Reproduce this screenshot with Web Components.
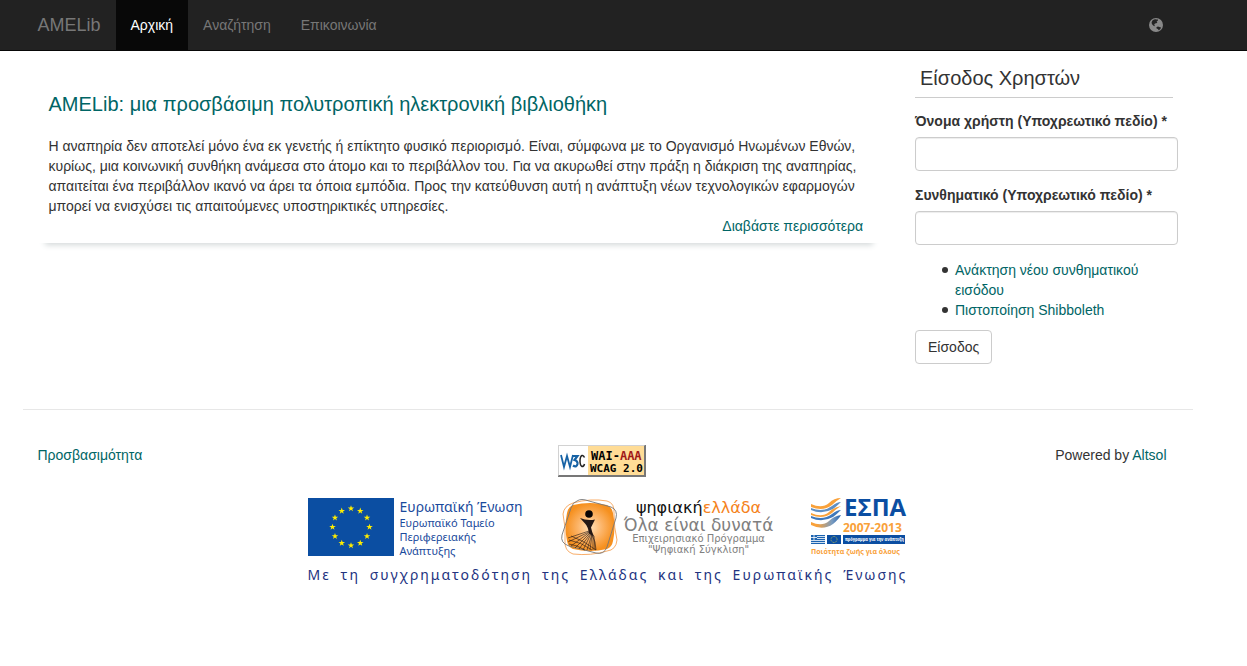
<!DOCTYPE html>
<html lang="el">
<head>
<meta charset="utf-8">
<meta name="viewport" content="width=device-width, initial-scale=1">
<title>AMELib</title>
<style>
  html { --link: #006565; --text: #333; --rule: #ccc; --gutter: 32px; }
  body {
    margin: 0;
    background: #fff;
    color: var(--text);
    font: 14px/20px "Liberation Sans", Arial, sans-serif;
  }
</style>
</head>
<body>
<amelib-page></amelib-page>
<script>
const define = (name, html) => {
  const template = document.createElement('template');
  template.innerHTML = html;
  customElements.define(name, class extends HTMLElement {
    constructor() {
      super();
      this.attachShadow({ mode: 'open' }).append(template.content.cloneNode(true));
    }
  });
};

const star = 'M0-3.2L.8-1 3.1-1 1.2.4 1.9 2.7 0 1.3-1.9 2.7-1.2.4-3.1-1-.8-1Z';
const stars = (cx, cy, r, s) => Array.from({ length: 12 }, (_, i) => {
  const a = i * Math.PI / 6;
  return `<path d="${star}" fill="#ffed00" transform="translate(${(cx + r * Math.sin(a)).toFixed(2)} ${(cy - r * Math.cos(a)).toFixed(2)}) scale(${s})"/>`;
}).join('');

define('site-navbar', `
<style>
  :host { display: block; background: #222; border-bottom: 1px solid #080808; }
  .bar { padding-right: var(--gutter); }
  nav { display: flex; max-width: 1170px; margin: 0 auto; }
  a { display: block; padding: 15px; color: #777; text-decoration: none; }
  .brand { font-size: 18px; }
  .active { color: #fff; background: #080808; }
  ul { display: flex; flex: 1; margin: 0; padding: 0; list-style: none; }
  button { display: block; margin: 0 15px 0 0; padding: 0 15px; border: 0; background: none; color: #888; }
  svg { display: block; }
</style>
<div class="bar"><nav>
  <a class="brand" href="#">AMELib</a>
  <ul>
    <li><a class="active" href="#">Αρχική</a></li>
    <li><a href="#">Αναζήτηση</a></li>
    <li><a href="#">Επικοινωνία</a></li>
  </ul>
  <button type="button" aria-label="Γλώσσα">
    <svg width="14" height="14" viewBox="0 0 14 14">
      <circle cx="7" cy="7" r="7" fill="currentColor"/>
      <path fill="#222" d="M3.400 2.600L5 1.500 6.400 1.200 7.600 1.600 9 1.600 8.800 2.800 7.600 3.400 8.400 4.400 7.300 5.200 6 5.600 5.200 6.400 5.800 7.400 5.400 8.200 4.200 7.400 2.900 6 2.600 4.400Z M7.400 9.200L9 8.600 10.400 9 12 9.400 11.400 11 9.800 12.200 8.800 11 7.600 10.600Z"/>
    </svg>
  </button>
</nav></div>`);

define('article-teaser', `
<style>
  :host { display: block; margin: 28px 6px 0 1px; padding: 14px 10px 7px; box-shadow: 0 8px 6px -6px #d3d8d9; }
  ::slotted(h2) { margin: 0 0 21px; font-size: 20px; font-weight: 400; line-height: 22px; color: var(--link); }
  ::slotted(p) { margin: 0; }
  .more { display: block; width: fit-content; margin: 0 6px 0 auto; color: var(--link); text-decoration: none; }
</style>
<slot></slot>
<a class="more" href="#">Διαβάστε περισσότερα</a>`);

define('login-panel', `
<style>
  :host { display: block; padding-top: 16px; }
  h2 { margin: 0 5px 13px 0; padding: 0 5px 8px; border-bottom: 1px solid var(--rule); font-size: 20px; font-weight: 400; line-height: 22px; }
  label { display: block; margin-bottom: 6px; font-weight: 700; white-space: nowrap; }
  input {
    display: block; box-sizing: border-box; width: 100%; height: 34px; margin: 0 0 14px; padding: 6px 12px;
    border: 1px solid var(--rule); border-radius: 4px; background: #fff; font: inherit; color: #555;
    box-shadow: inset 0 1px 1px #00000013;
  }
  ul { margin: 15px 0 10px; padding-left: 40px; list-style: none; }
  li::before { content: ""; display: inline-block; width: 6px; height: 6px; margin: 0 7px 0 -13px; border-radius: 50%; background: #333; vertical-align: 2px; }
  a { color: var(--link); text-decoration: none; }
  button { display: block; padding: 6px 12px; border: 1px solid var(--rule); border-radius: 4px; background: #fff; color: #333; font: inherit; }
</style>
<h2>Είσοδος Χρηστών</h2>
<form>
  <label for="user">Όνομα χρήστη (Υποχρεωτικό πεδίο) *</label>
  <input id="user" type="text">
  <label for="pass">Συνθηματικό (Υποχρεωτικό πεδίο) *</label>
  <input id="pass" type="password">
  <ul>
    <li><a href="#">Ανάκτηση νέου συνθηματικού εισόδου</a></li>
    <li><a href="#">Πιστοποίηση Shibboleth</a></li>
  </ul>
  <button type="button">Είσοδος</button>
</form>`);

define('wcag-badge', `
<style>
  :host { display: block; }
  a, svg { display: block; }
  text { font: 700 11px "DejaVu Sans Mono", monospace; }
  .level { font-size: 12px; }
</style>
<a href="#" aria-label="W3C WAI-AAA WCAG 2.0">
<svg width="88" height="32" viewBox="0 0 88 32">
  <path fill="#777" d="M0 0h88v32H0z"/>
  <path fill="#d2d2d2" d="M0 0h87l-1 1H1v29l-1 1z"/>
  <path fill="#fff" d="M1 1h29v29H1z"/>
  <path fill="#ffdc96" d="M30 1h56v29H30z"/>
  <g fill="none" stroke="#1662a5">
    <path stroke-width="1.800" d="M3 10l3 12 3-11 3 11 3-12"/>
    <path stroke-width="2.200" d="M14 11h5.500l-3 4q3.500 1 3 4-1 4-4.500 1.500"/>
  </g>
  <path fill="none" stroke="#222" stroke-width="1.500" d="M26.500 12.500q-1-2.500-2.500-2-2 1-2 5.500t2 5.500q2 0 2.500-2.500"/>
  <text class="level" x="33" y="15">WAI-<tspan fill="#a01818">AAA</tspan></text>
  <text x="32" y="27">WCAG 2.0</text>
</svg></a>`);

define('eu-logo', `
<style>
  :host { display: flex; gap: 6px; align-items: flex-start; color: #1a4a9c; font: 11px/14px "Noto Sans", sans-serif; }
  svg { display: block; margin-top: 1px; }
  strong { display: block; font-size: 14px; font-weight: 400; line-height: 19px; }
  span { display: block; white-space: nowrap; }
  p { margin: 0; }
</style>
<svg width="86" height="58" viewBox="0 0 86 58"><path fill="#0b4ea2" d="M0 0h86v58H0z"/>${stars(43, 29, 18.5, 1.05)}</svg>
<p><strong>Ευρωπαϊκή Ένωση</strong><span>Ευρωπαϊκό Ταμείο</span><span>Περιφερειακής</span><span>Ανάπτυξης</span></p>`);

define('digital-greece-logo', `
<style>
  :host { display: flex; gap: 6px; color: #808080; text-align: center; font: 10px/11px "DejaVu Sans", sans-serif; }
  svg { display: block; margin-top: 1px; }
  p { margin: 1px 0 0; }
  span { display: block; white-space: nowrap; }
  .name { color: #111; font-size: 16px; line-height: 19px; }
  .name b { color: #f58220; font-weight: 400; }
  .motto { font-size: 17px; line-height: 16px; }
</style>
<svg width="57" height="58" viewBox="0 0 57 58">
  <defs><radialGradient id="glow"><stop offset="0" stop-color="#ffe0b8"/><stop offset=".5" stop-color="#fcb468"/><stop offset="1" stop-color="#f6901e"/></radialGradient></defs>
  <path fill="url(#glow)" d="M12 7Q29 3 46 7 51 9 52 15 55 29 52 43 51 49 46 51 29 55 12 51 7 49 6 43 3 29 6 15 7 9 12 7Z"/>
  <g fill="none" stroke-width=".9">
    <path stroke="#f7a458" d="M12 5Q30 0 46 3 54 5 53 16 53 30 56 42 55 52 46 53 30 58 12 56 3 53 4 42 5 30 2 16 3 8 12 5Z"/>
    <path stroke="#777" d="M16 3Q20 0 28 3L50 9Q57 12 55 20L46 49Q43 57 35 55L8 48Q-1 45 1 37L10 10Q12 4 16 3Z"/>
  </g>
  <circle cx="28" cy="16" r="3.800" fill="#080404"/>
  <path fill="#231815" d="M19 20q7 3 15 1.500-2 4-4 8 1 5 3 9l-5-3q-1-7-4-10z"/>
  <path fill="none" stroke="#231815" stroke-width=".6" d="M28 33L7 40M28 34L7 44M29 34L10 48M29 35L14 50M30 35L18 51M30 36L22 52M31 36L26 52M31 37L29 52M32 37L32 52M33 38L34 52M28 30L34 44 35 52M10 38Q22 42 35 52M8 42Q20 44 31 52M8 46Q16 47 24 52"/>
</svg>
<p><span class="name">ψηφιακή<b>ελλάδα</b></span><span class="motto">Όλα είναι δυνατά</span><span>Επιχειρησιακό Πρόγραμμα</span><span>"Ψηφιακή Σύγκλιση"</span></p>`);

define('espa-logo', `
<style>
  :host { display: block; }
  svg { display: block; overflow: visible; }
  text { font-family: "Open Sans", sans-serif; font-weight: 700; }
  .title { font-size: 24px; }
  .years { font-size: 12px; }
  .band { font-family: "Open Sans Condensed", "Open Sans", sans-serif; font-size: 5px; }
  .tag { font-size: 7px; }
</style>
<svg width="96" height="60" viewBox="0 0 96 60">
  <defs><linearGradient id="wave"><stop offset=".2" stop-color="#f9a13a"/><stop offset=".7" stop-color="#7a9cc0"/><stop offset="1" stop-color="#2a66b0"/></linearGradient></defs>
  <path fill="#f9a13a" d="M0 7Q11 12 18 6 23 1 30 1 25 4 21 8 12 15 0 10Z"/>
  <path fill="#5f8fc4" d="M0 11Q12 16 21 9 26 5 30 5 26 9 22 12 11 18 0 13Z"/>
  <path fill="#f9a13a" d="M0 16Q11 21 18 15 23 10 30 9 25 12 21 16 12 23 0 18Z"/>
  <path fill="#3f78bb" d="M0 19Q12 24 21 17 26 13 30 13 26 17 22 20 11 26 0 21Z"/>
  <path fill="url(#wave)" d="M0 25Q11 30 18 24 23 19 30 18 28 22 22 27 12 34 0 28Z"/>
  <text class="title" x="33" y="19" fill="#0b4ea2">ΕΣΠΑ</text>
  <text class="years" x="32" y="35" fill="#f9a13a">2007-2013</text>
  <path fill="#1c63b0" d="M0 38h14v9H0z"/>
  <path stroke="#fff" d="M6 39.500h8M6 41.500h8M0 43.500h14M0 45.500h14M3 38v5M0 40.500h6" stroke-width=".8"/>
  <path fill="#0b4ea2" d="M16 38h14v9H16zM32 38h62v9H32z"/>
  <circle cx="23" cy="42.500" r="3" fill="none" stroke="#d9d34d" stroke-width=".8" stroke-dasharray=".8 .77"/>
  <text class="band" x="34" y="44" fill="#fff">πρόγραμμα για την ανάπτυξη</text>
  <text class="tag" x="0" y="57" fill="#f9a13a">Ποιότητα ζωής για όλους</text>
</svg>`);

define('funding-banner', `
<style>
  :host { display: block; width: 600px; max-width: 100%; margin: 0 auto; }
  .logos { display: flex; justify-content: space-between; }
  .line { display: flex; justify-content: space-between; margin: 7px 0 0; color: #23337f; font: 14px/20px "Noto Sans", sans-serif; letter-spacing: 2px; }
</style>
<div class="logos"><eu-logo></eu-logo><digital-greece-logo></digital-greece-logo><espa-logo></espa-logo></div>
<p class="line"><span>Με</span> <span>τη</span> <span>συγχρηματοδότηση</span> <span>της</span> <span>Ελλάδας</span> <span>και</span> <span>της</span> <span>Ευρωπαϊκής</span> <span>Ένωσης</span></p>`);

define('site-footer', `
<style>
  :host { display: block; margin-top: 45px; padding: 35px 15px 0; border-top: 1px solid #e7e7e7; }
  .row { display: grid; grid-template-columns: 1fr auto 1fr; align-items: start; margin-bottom: 20px; }
  .credit { margin: 0 11px 0 0; text-align: right; }
  wcag-badge { margin-right: 12px; }
  a { color: var(--link); text-decoration: none; }
</style>
<div class="row">
  <a href="#">Προσβασιμότητα</a>
  <wcag-badge></wcag-badge>
  <p class="credit">Powered by <a href="#">Altsol</a></p>
</div>
<funding-banner></funding-banner>`);

define('amelib-page', `
<style>
  :host { display: block; }
  .page { padding-right: var(--gutter); }
  .container { max-width: 1170px; margin: 0 auto; }
  main { display: grid; grid-template-columns: 3fr 1fr; }
  main > * { min-width: 0; padding: 0 15px; }
</style>
<site-navbar></site-navbar>
<div class="page"><div class="container">
  <main>
    <section>
      <article-teaser>
        <h2>AMELib: μια προσβάσιμη πολυτροπική ηλεκτρονική βιβλιοθήκη</h2>
        <p>Η αναπηρία δεν αποτελεί μόνο ένα εκ γενετής ή επίκτητο φυσικό περιορισμό. Είναι, σύμφωνα με το Οργανισμό Ηνωμένων Εθνών, κυρίως, μια κοινωνική συνθήκη ανάμεσα στο άτομο και το περιβάλλον του. Για να ακυρωθεί στην πράξη η διάκριση της αναπηρίας, απαιτείται ένα περιβάλλον ικανό να άρει τα όποια εμπόδια. Προς την κατεύθυνση αυτή η ανάπτυξη νέων τεχνολογικών εφαρμογών μπορεί να ενισχύσει τις απαιτούμενες υποστηρικτικές υπηρεσίες.</p>
      </article-teaser>
    </section>
    <aside><login-panel></login-panel></aside>
  </main>
  <site-footer></site-footer>
</div></div>`);
</script>
</body>
</html>
